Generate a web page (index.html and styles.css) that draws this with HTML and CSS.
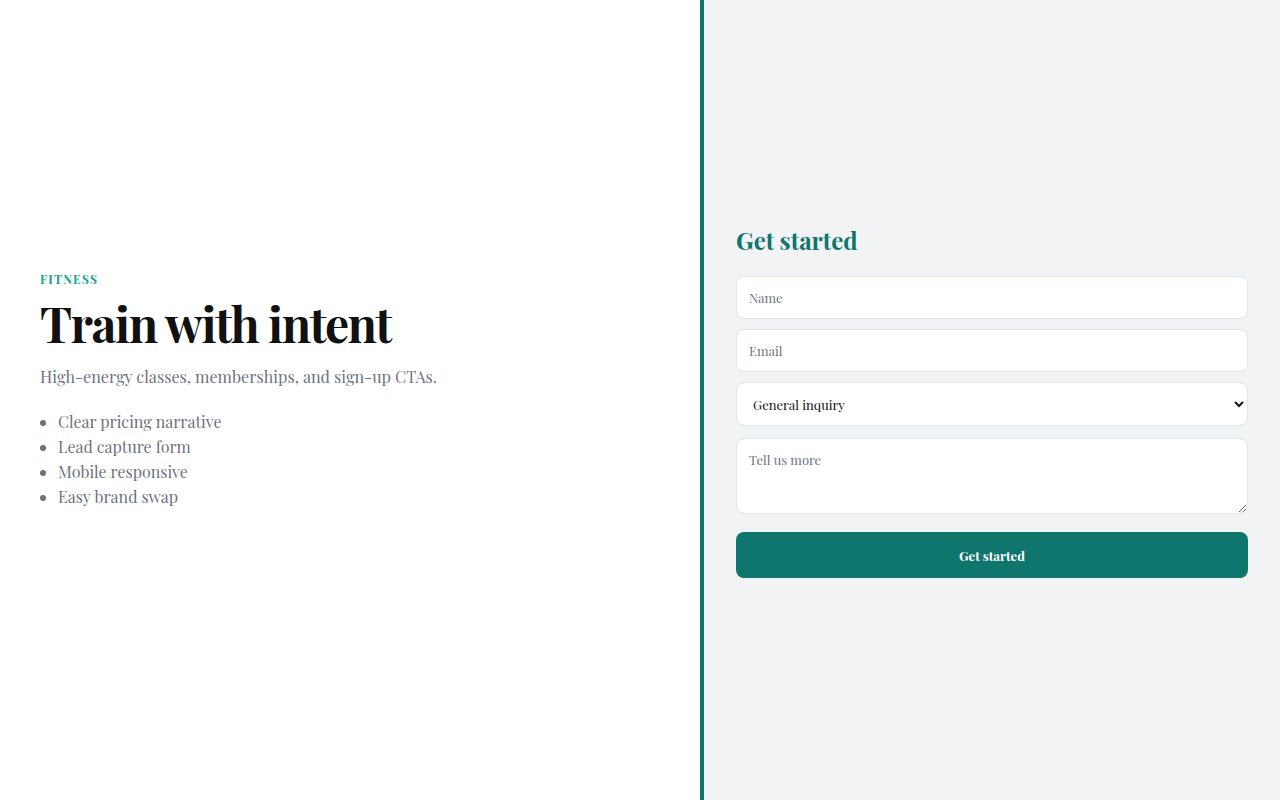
FILE: index.html
```html
<!DOCTYPE html>
<html lang="en">
<head>
  <meta charset="UTF-8" />
  <title>Fitness - Train with intent</title>
  <link rel="stylesheet" href="styles.css">
</head>
<body>

  <main class="layout">
    <!-- Intro -->
    <section class="intro">
      <p class="eyebrow">Fitness</p>
      <h1 class="title">Train with intent</h1>
      <p class="lead">High-energy classes, memberships, and sign-up CTAs.</p>
      <ul class="features">
        <li>Clear pricing narrative</li>
        <li>Lead capture form</li>
        <li>Mobile responsive</li>
        <li>Easy brand swap</li>
      </ul>
    </section>

    <!-- Lead form -->
    <aside class="panel">
      <h2 class="panel-title">Get started</h2>
      <form class="lead-form">
        <input type="text" placeholder="Name" />
        <input type="email" placeholder="Email" />
        <select>
          <option>General inquiry</option>
          <option>Memberships</option>
          <option>Classes</option>
        </select>
        <textarea rows="3" placeholder="Tell us more"></textarea>
        <button type="submit">Get started</button>
      </form>
    </aside>
  </main>

</body>
</html>
```

FILE: styles.css
```css
body {
  margin: 0;
  background-color: #ffffff;
  color: #111111;
  font-family: 'Playfair Display', 'Liberation Serif', serif;
}

.layout {
  display: grid;
  grid-template-columns: 1fr 580px;
  min-height: 100vh;
}

/* Columna izquierda */
.intro {
  display: flex;
  flex-direction: column;
  justify-content: center;
  padding: 40px;
}

.eyebrow {
  margin: 0 0 10px;
  color: #14a38f;
  font-size: 12px;
  font-weight: 700;
  letter-spacing: 0.1em;
  text-transform: uppercase;
}

.title {
  margin: 0 0 16px;
  font-size: 48px;
  font-weight: 700;
  line-height: 1.1;
  letter-spacing: -0.03em;
  color: #111111;
}

.lead {
  margin: 0 0 23px;
  font-size: 16.2px;
  color: #6b7280;
}

.features {
  margin: 0 0 20px;
  padding-left: 18px;
  font-size: 16px;
  line-height: 1.55;
  color: #6b7280;
}

/* Panel del formulario */
.panel {
  display: flex;
  flex-direction: column;
  justify-content: center;
  background-color: #f2f3f5;
  border-left: 4px solid #0f766e;
  padding: 34px 32px 32px;
}

.panel-title {
  margin: 0 0 20px;
  font-size: 24px;
  font-weight: 700;
  color: #0f766e;
}

.lead-form {
  display: flex;
  flex-direction: column;
  gap: 10px;
}

.lead-form input,
.lead-form select,
.lead-form textarea {
  box-sizing: border-box;
  width: 100%;
  border: 1px solid #e3e5e8;
  border-radius: 8px;
  background-color: #ffffff;
  padding: 12px;
  font-family: inherit;
  font-size: 13px;
  color: #111111;
}

.lead-form input::placeholder,
.lead-form textarea::placeholder {
  color: #6b7280;
}

.lead-form select {
  height: 44px;
  margin-bottom: 2px;
}

.lead-form textarea {
  height: 76px;
  resize: vertical;
}

.lead-form button {
  margin-top: 8px;
  height: 46px;
  border: none;
  border-radius: 8px;
  background-color: #0f766e;
  color: #ffffff;
  font-family: inherit;
  font-size: 13px;
  font-weight: 700;
  cursor: pointer;
}
```
